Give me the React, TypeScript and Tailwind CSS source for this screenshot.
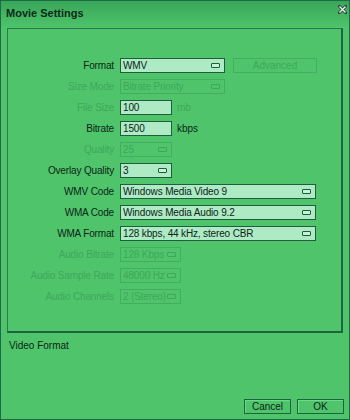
import React from "react";

const font = { fontFamily: '"Liberation Sans", Arial, sans-serif' };

function DropIcon({ disabled }: { disabled?: boolean }) {
  return (
    <span
      className={`inline-block shrink-0 w-[9px] h-[5px] rounded-[1px] border ${
        disabled ? "border-[#3fa65c]" : "border-[#1c5b3c] bg-[#c8f2d6]"
      }`}
    />
  );
}

function Field({
  value,
  width,
  disabled,
  drop,
}: {
  value: string;
  width: string;
  disabled?: boolean;
  drop?: boolean;
}) {
  return (
    <div
      className={`${width} h-[15px] flex items-center gap-[1px] pl-[2px] pr-[4px] border ${
        disabled
          ? "border-[#43ad60] bg-[#4fc46b] text-[#3ea85c]"
          : "border-[#1d5e40] bg-[#aeeac4] text-[#0d2418]"
      } text-[10px] tracking-[-0.15px] leading-none`}
    >
      <span className="flex-1 min-w-0 whitespace-nowrap overflow-hidden">{value}</span>
      {drop && <DropIcon disabled={disabled} />}
    </div>
  );
}

function Row({
  label,
  disabled,
  children,
}: {
  label: string;
  disabled?: boolean;
  children: React.ReactNode;
}) {
  return (
    <div className="flex items-center h-[15px]">
      <div
        className={`w-[112px] text-right text-[10px] tracking-[-0.15px] leading-none pr-[6px] whitespace-nowrap ${
          disabled ? "text-[#3ea85c]" : "text-[#0d2418]"
        }`}
      >
        {label}
      </div>
      {children}
    </div>
  );
}

export default function App() {
  return (
    <div
      className="w-[350px] h-[420px] bg-[#4fc46b] border border-[#1e6a47] flex flex-col relative overflow-hidden"
      style={font}
    >
      <div className="h-[27px] flex items-start pl-[5px] pt-[4px] bg-gradient-to-b from-[#38a659] to-[#4fc46b]">
        <span className="text-[11px] font-bold text-[#0f2a1c]">Movie Settings</span>
      </div>
      <div className="absolute right-[2px] top-[4px]">
        <svg width="9" height="9" viewBox="0 0 9 9">
          <path d="M1 1 L8 8 M8 1 L1 8" stroke="#2f4a3a" strokeWidth="3" strokeLinecap="square" />
          <path d="M1.5 1.5 L7.5 7.5 M7.5 1.5 L1.5 7.5" stroke="#e8f5ec" strokeWidth="1.3" />
        </svg>
      </div>
      <div className="ml-[6px] mr-[6px] h-[305px] border-t border-l border-[#2a7a52] border-r-2 border-b-2 border-r-[#1d6443] border-b-[#1d6443] flex flex-col gap-[6px] pt-[29px]">
        <Row label="Format">
          <Field value="WMV" width="w-[105px]" drop />
          <div className="ml-[8px] w-[84px] h-[15px] border border-[#43ad60] text-[#3ea85c] text-[10px] leading-none flex items-center justify-center">
            Advanced
          </div>
        </Row>
        <Row label="Size Mode" disabled>
          <Field value="Bitrate Priority" width="w-[105px]" disabled drop />
        </Row>
        <Row label="File Size" disabled>
          <Field value="100" width="w-[52px]" />
          <span className="ml-[5px] text-[10px] text-[#3ea85c]">mb</span>
        </Row>
        <Row label="Bitrate">
          <Field value="1500" width="w-[52px]" />
          <span className="ml-[5px] text-[10px] text-[#0d2418]">kbps</span>
        </Row>
        <Row label="Quality" disabled>
          <Field value="25" width="w-[52px]" disabled drop />
        </Row>
        <Row label="Overlay Quality">
          <Field value="3" width="w-[52px]" drop />
        </Row>
        <Row label="WMV Code">
          <Field value="Windows Media Video 9" width="w-[196px]" drop />
        </Row>
        <Row label="WMA Code">
          <Field value="Windows Media Audio 9.2" width="w-[196px]" drop />
        </Row>
        <Row label="WMA Format">
          <Field value="128 kbps, 44 kHz, stereo CBR" width="w-[196px]" drop />
        </Row>
        <Row label="Audio Bitrate" disabled>
          <Field value="128 Kbps" width="w-[61px]" disabled drop />
        </Row>
        <Row label="Audio Sample Rate" disabled>
          <Field value="48000 Hz" width="w-[61px]" disabled drop />
        </Row>
        <Row label="Audio Channels" disabled>
          <Field value="2 (Stereo)" width="w-[61px]" disabled drop />
        </Row>
      </div>
      <div className="pl-[8px] pt-[5px] text-[10px] text-[#0d2418]">Video Format</div>
      <div className="flex-1" />
      <div className="flex justify-end gap-[6px] pr-[5px] pb-[5px]">
        <div className="w-[47px] h-[15px] border border-[#1d6443] shadow-[inset_1px_1px_0_#6fd88a] text-[10px] leading-none text-[#0d2418] flex items-center justify-center">
          Cancel
        </div>
        <div className="w-[47px] h-[15px] border border-[#1d6443] shadow-[inset_1px_1px_0_#6fd88a] text-[10px] leading-none text-[#0d2418] flex items-center justify-center">
          OK
        </div>
      </div>
    </div>
  );
}
